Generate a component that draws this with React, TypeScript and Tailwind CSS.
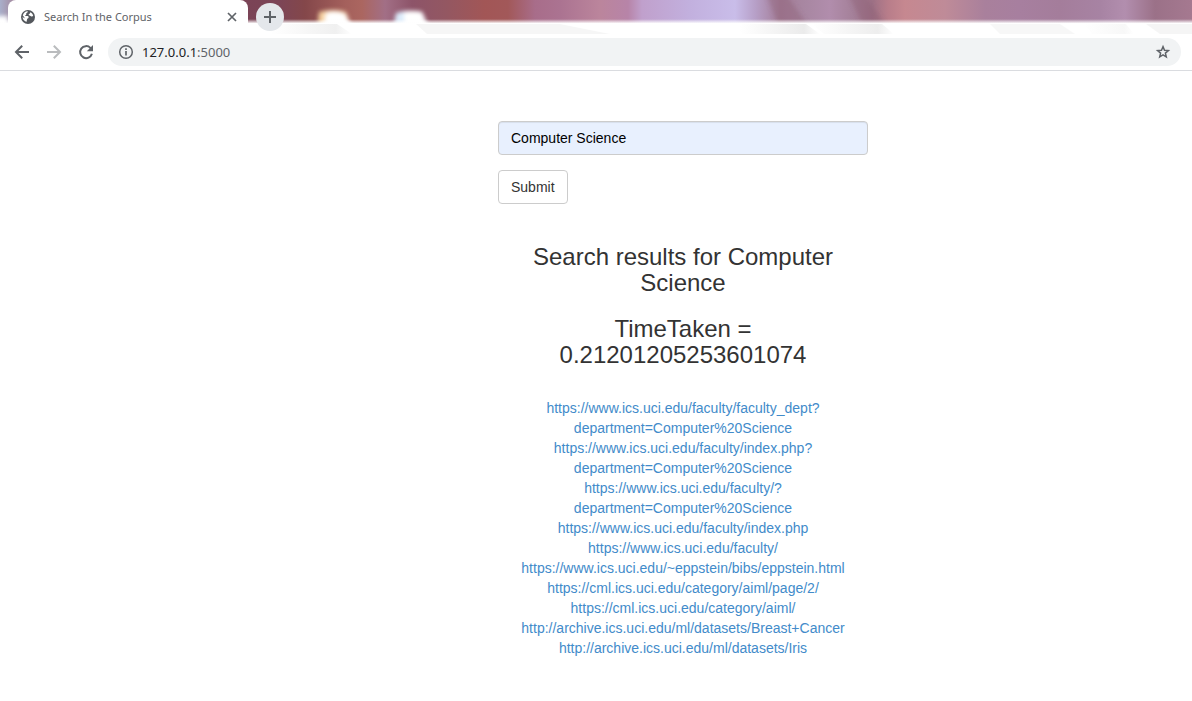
import { useState, type FormEvent, type ReactNode } from "react";

const results = [
  "https://www.ics.uci.edu/faculty/faculty_dept?department=Computer%20Science",
  "https://www.ics.uci.edu/faculty/index.php?department=Computer%20Science",
  "https://www.ics.uci.edu/faculty/?department=Computer%20Science",
  "https://www.ics.uci.edu/faculty/index.php",
  "https://www.ics.uci.edu/faculty/",
  "https://www.ics.uci.edu/~eppstein/bibs/eppstein.html",
  "https://cml.ics.uci.edu/category/aiml/page/2/",
  "https://cml.ics.uci.edu/category/aiml/",
  "http://archive.ics.uci.edu/ml/datasets/Breast+Cancer",
  "http://archive.ics.uci.edu/ml/datasets/Iris",
];

const glassStops: [number, string][] = [
  [0, "#a9afca"],
  [12, "#a58fa5"],
  [240, "#7a4356"],
  [280, "#7c4556"],
  [305, "#84474a"],
  [345, "#a4605c"],
  [362, "#ab6660"],
  [385, "#a26f86"],
  [412, "#8d5469"],
  [445, "#935762"],
  [485, "#a25656"],
  [508, "#a25859"],
  [535, "#a86d8a"],
  [560, "#ab7391"],
  [600, "#bb859c"],
  [628, "#b784a8"],
  [642, "#c0a0cc"],
  [690, "#c2b0de"],
  [735, "#c9bde9"],
  [755, "#b7a0c8"],
  [780, "#a47e98"],
  [805, "#a887a2"],
  [830, "#b18dac"],
  [852, "#a5819a"],
  [872, "#9d7186"],
  [888, "#b87d8a"],
  [905, "#c68890"],
  [945, "#bf8b98"],
  [985, "#a9809c"],
  [1020, "#a77f9f"],
  [1060, "#a47d9b"],
  [1100, "#a783a3"],
  [1125, "#b28eae"],
  [1155, "#9b7188"],
  [1192, "#a57990"],
];

function WindowGlass() {
  return (
    <svg
      className="absolute inset-0 h-full w-full"
      viewBox="0 0 1192 34"
      preserveAspectRatio="none"
      aria-hidden="true"
    >
      <defs>
        <linearGradient id="glass" x1="0" x2="1192" y1="0" y2="0" gradientUnits="userSpaceOnUse">
          {glassStops.map(([x, color]) => (
            <stop key={x} offset={x / 1192} stopColor={color} />
          ))}
        </linearGradient>
        <linearGradient id="frost" x1="0" x2="0" y1="0" y2="34" gradientUnits="userSpaceOnUse">
          <stop offset="0.56" stopColor="#fff" stopOpacity="0" />
          <stop offset="0.69" stopColor="#fff" stopOpacity="1" />
        </linearGradient>
        <linearGradient id="shade" x1="0" x2="1" y1="0" y2="0">
          <stop offset="0" stopColor="#e6e6e6" stopOpacity="0" />
          <stop offset="0.8" stopColor="#e6e6e6" />
          <stop offset="1" stopColor="#e6e6e6" stopOpacity="0" />
        </linearGradient>
        <filter id="soft" x="-30%" y="-30%" width="160%" height="160%">
          <feGaussianBlur stdDeviation="2" />
        </filter>
      </defs>
      <rect width="1192" height="34" fill="url(#glass)" />
      <g filter="url(#soft)">
        <path d="M766 -6H786L814 34H782Z" fill="#8a5870" opacity=".35" />
        <path d="M848 -6H864L892 34H868Z" fill="#8a5870" opacity=".35" />
        <path d="M317 34L319 12Q334 8 346 12L354 34Z" fill="#f6d2a0" />
        <path d="M322 34L326 13Q336 10 345 14L356 34Z" fill="#fff" />
        <path d="M392 34L396 13Q408 9 422 12L432 34Z" fill="#dcebfb" />
        <path d="M404 34V12Q412 10 422 12L431 34Z" fill="#fff" />
        <path d="M-6 16H8V40H-6Z" fill="#fff" />
      </g>
      <rect width="1192" height="34" fill="url(#frost)" />
      <g fill="url(#shade)">
        <path d="M270 24H337L352 34H270Z" opacity=".6" />
        <path d="M740 24H806L820 34H740Z" opacity=".8" />
        <path d="M812 24H882L894 34H824Z" opacity=".7" />
        <path d="M1084 24H1126L1134 34H1092Z" opacity=".3" />
      </g>
      <g fill="#e6e6e6">
        <path d="M416 24H560L610 34H427Z" opacity=".35" />
        <path d="M990 24H1060L1075 34H1000Z" opacity=".3" />
        <path d="M1146 24H1192V34H1160Z" opacity=".4" />
      </g>
    </svg>
  );
}

function Icon({ children }: { children: ReactNode }) {
  return (
    <svg
      className="size-4 shrink-0"
      viewBox="0 0 16 16"
      fill="none"
      stroke="currentColor"
      strokeWidth="2"
      aria-hidden="true"
    >
      {children}
    </svg>
  );
}

function BrowserBar() {
  return (
    <header className="border-b border-[#dadce0] bg-white text-[#5f6368]">
      <div className="relative h-[34px] overflow-hidden">
        <WindowGlass />
        <div className="relative flex h-full items-start gap-2 pl-2">
          <div className="flex h-full w-60 items-center gap-2 rounded-t-lg bg-white pr-2 pl-3">
            <Icon>
              <circle cx="8" cy="8" r="7" fill="#54585d" stroke="none" />
              <path
                d="M7.6 2.2C8.2 3 7.3 3.6 6.5 4.1C5.8 4.6 6.7 5.1 6.1 5.8C5.5 6.5 5 6.4 5 7H7.6C8.7 7 8.8 8.2 8.5 8.8C8.2 9.5 7.2 9.4 7.1 10.3C7 11.1 6.7 11.7 6.5 12.9C4.2 12.2 2.6 10.2 2.6 7.8L4.4 9.6V8.2L2.8 6.5C3.4 4 5.2 2.3 7.6 2.2Z"
                fill="#fff"
                stroke="none"
              />
              <path
                d="M10.5 3.3C11.9 4.1 12.9 5.5 13.2 7C12.3 7.4 11.8 7.6 11 7.2C10.3 6.9 9.8 6.3 9 6.2C8.4 6 8.6 5.2 9.2 5C10 4.7 9.9 4 10.5 3.3Z"
                fill="#fff"
                stroke="none"
              />
              <path d="M10.3 9.5H12.8C12.3 11 11.3 12 10 12.7C9.7 11.5 9.5 10.3 10.3 9.5Z" fill="#54585d" stroke="none" />
            </Icon>
            <span className="flex-1 font-['Noto_Sans',sans-serif] text-[11px] leading-4">
              Search In the Corpus
            </span>
            <button type="button" aria-label="Close tab">
              <Icon>
                <path d="M4 4L12 12M12 4L4 12" strokeWidth="1.7" />
              </Icon>
            </button>
          </div>
          <button
            type="button"
            aria-label="New tab"
            className="mt-[3px] grid size-7 place-items-center rounded-full bg-[#e4e7eb]"
          >
            <Icon>
              <path d="M8 2V14M2 8H14" />
            </Icon>
          </button>
        </div>
      </div>
      <div className="flex items-center pt-1 pr-[11px] pb-1 pl-3.5">
        <nav className="flex gap-4 pr-3.5" aria-label="History">
          <button type="button" aria-label="Back">
            <Icon>
              <path d="M15 8H2.5M8.2 1.8L2 8L8.2 14.2" />
            </Icon>
          </button>
          <button type="button" aria-label="Forward" className="text-[#babcbe]">
            <Icon>
              <path d="M1 8H13.5M7.8 1.8L14 8L7.8 14.2" />
            </Icon>
          </button>
          <button type="button" aria-label="Reload">
            <Icon>
              <path d="M13.9 9.8A6 6 0 1 1 12.4 3.9L13.2 4.8" />
              <path d="M15 1V7.2H8.8Z" fill="currentColor" stroke="none" />
            </Icon>
          </button>
        </nav>
        <div className="flex h-7 flex-1 items-center gap-2 rounded-full bg-[#f1f3f4] px-2.5">
          <Icon>
            <circle cx="8" cy="8" r="6.3" strokeWidth="1.5" />
            <path d="M8 7.1V11.6M8 4.3V6" strokeWidth="1.7" />
          </Icon>
          <span className="flex-1 font-['Noto_Sans',sans-serif] text-[13px] leading-5">
            <span className="text-[#202124]">127.0.0.1</span>:5000
          </span>
          <button type="button" aria-label="Bookmark this page">
            <Icon>
              <path
                d="M8 2.6L9.5 6.2L13.4 6.5L10.4 9.1L11.3 12.9L8 10.9L4.7 12.9L5.6 9.1L2.6 6.5L6.5 6.2Z"
                strokeWidth="1.5"
              />
            </Icon>
          </button>
        </div>
      </div>
    </header>
  );
}

export default function App() {
  const [query, setQuery] = useState("Computer Science");

  return (
    <div className="min-h-screen bg-white font-['Liberation_Sans',Arial,sans-serif] text-sm leading-5 text-[#333]">
      <BrowserBar />
      <main className="flex justify-center pt-[50px] pb-10 pl-[174px]">
        <div className="w-full max-w-[370px]">
          <form
            className="flex flex-col items-start gap-[15px]"
            onSubmit={(event: FormEvent) => event.preventDefault()}
          >
            <input
              type="text"
              aria-label="Search query"
              value={query}
              onChange={(event) => setQuery(event.target.value)}
              className="h-[34px] w-full rounded border border-[#ccc] bg-[#e8f0fe] px-3 text-black shadow-[inset_0_1px_1px_rgba(0,0,0,0.075)]"
            />
            <button type="submit" className="h-[34px] rounded border border-[#ccc] bg-white px-3">
              Submit
            </button>
          </form>
          <section className="mt-10 text-center">
            <h3 className="text-2xl leading-[26px]">Search results for Computer Science</h3>
            <h3 className="mt-5 text-2xl leading-[26px]">TimeTaken = 0.21201205253601074</h3>
            <ul className="mt-[30px] text-[#428bca]">
              {results.map((url) => (
                <li key={url}>
                  <a href={url} className="hover:underline">
                    {url}
                  </a>
                </li>
              ))}
            </ul>
          </section>
        </div>
      </main>
    </div>
  );
}
